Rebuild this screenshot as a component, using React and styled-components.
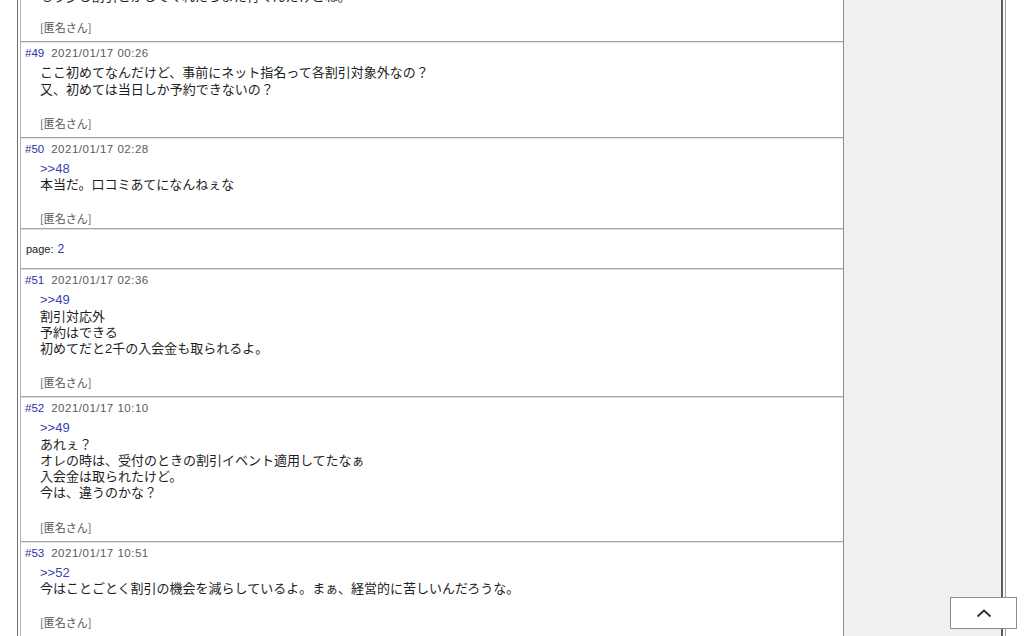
import React from "react";
import styled, { createGlobalStyle } from "styled-components";

const Global = createGlobalStyle`
  html, body { margin: 0; padding: 0; background: #ffffff; }
  body { overflow: hidden; font-family: "Liberation Sans", "Noto Sans CJK JP", sans-serif; }
`;

const Page = styled.div`
  display: flex;
  height: 636px;
  overflow: hidden;
  padding-left: 17px;
  background: #ffffff;
`;

const ThreadFrame = styled.div`
  border-left: 1px solid #6e6e6e;
  padding-left: 2px;
  display: flex;
`;

const Thread = styled.main`
  width: 822px;
  border-left: 1px solid #b4b4b4;
  border-right: 1px solid #8e8e8e;
  overflow: hidden;
  background: #ffffff;
`;

const Sidebar = styled.aside`
  width: 157px;
  background: #f0f0f0;
`;

const WindowEdge = styled.div`
  width: 2px;
  border-left: 2px solid #5c5c5c;
  border-right: 1px solid #a0a0a0;
  background: #fafafa;
`;

const Divider = styled.hr`
  margin: 0;
  height: 0;
  border: none;
  border-top: 1px solid #a3a3a3;
  border-bottom: 1px solid #e2e2e2;
`;

const Post = styled.article`
  padding: 0 4px ${(p) => (p.$tight ? "3px" : "7px")} 4px;
  margin-top: ${(p) => (p.$clipped ? "-11px" : "0")};
`;

const Header = styled.div`
  display: flex;
  align-items: baseline;
  padding-top: 3px;
  line-height: 14px;
  height: 14px;
`;

const Num = styled.span`
  color: #2a2fa6;
  font-size: 11.5px;
  font-family: "Liberation Sans", sans-serif;
`;

const DateText = styled.span`
  margin-left: 7px;
  color: #5a5a5a;
  font-size: 11.5px;
  letter-spacing: 0.5px;
  font-family: "Liberation Sans", sans-serif;
`;

const Body = styled.div`
  margin-top: ${(p) => (p.$clipped ? "0" : "5px")};
  padding-left: 15px;
  font-size: 13px;
  line-height: 16.25px;
  color: #1e1e1e;
  font-family: "Liberation Sans", "Noto Sans CJK JP", sans-serif;
`;

const Line = styled.div`
  white-space: nowrap;
`;

const Anchor = styled.a`
  display: block;
  color: #3a44b0;
  text-decoration: none;
`;

const Footer = styled.div`
  margin-top: ${(p) => (p.$clipped ? "15px" : "18px")};
  padding-left: 15px;
  font-size: 11px;
  line-height: 14px;
  color: #555555;
  font-family: "Noto Sans CJK JP", sans-serif;
`;

const PageRow = styled.div`
  height: 38px;
  display: flex;
  align-items: center;
  padding-left: 5px;
  font-size: 11px;
  color: #222;
  gap: 4px;
`;

const PageLink = styled.a`
  color: #2a2fa6;
  font-size: 12px;
  text-decoration: none;
`;

const TopButton = styled.button`
  position: fixed;
  left: 950px;
  bottom: 7px;
  width: 67px;
  height: 32px;
  background: #ffffff;
  border: 1px solid #8c8c8c;
  padding: 0;
  display: flex;
  align-items: center;
  justify-content: center;
  cursor: pointer;
`;

const posts = [
  {
    no: 49,
    date: "2021/01/17 00:26",
    lines: [
      "ここ初めてなんだけど、事前にネット指名って各割引対象外なの？",
      "又、初めては当日しか予約できないの？",
    ],
  },
  {
    no: 50,
    date: "2021/01/17 02:28",
    anchor: ">>48",
    lines: ["本当だ。口コミあてになんねぇな"],
  },
  { page: 2 },
  {
    no: 51,
    date: "2021/01/17 02:36",
    anchor: ">>49",
    lines: ["割引対応外", "予約はできる", "初めてだと2千の入会金も取られるよ。"],
  },
  {
    no: 52,
    date: "2021/01/17 10:10",
    anchor: ">>49",
    lines: [
      "あれぇ？",
      "オレの時は、受付のときの割引イベント適用してたなぁ",
      "入会金は取られたけど。",
      "今は、違うのかな？",
    ],
  },
  {
    no: 53,
    date: "2021/01/17 10:51",
    anchor: ">>52",
    lines: ["今はことごとく割引の機会を減らしているよ。まぁ、経営的に苦しいんだろうな。"],
  },
];

function PostItem({ p, tight }) {
  return (
    <Post $tight={tight}>
      <Header>
        <Num>#{p.no}</Num>
        <DateText>{p.date}</DateText>
      </Header>
      <Body>
        {p.anchor && <Anchor href="#">{p.anchor}</Anchor>}
        {p.lines.map((l, i) => (
          <Line key={i}>{l}</Line>
        ))}
      </Body>
      <Footer>[匿名さん]</Footer>
    </Post>
  );
}

export default function App() {
  return (
    <>
      <Global />
      <Page>
        <ThreadFrame>
          <Thread>
            <Post $clipped>
              <Body $clipped>
                <Line>もう少し割引とかしてくれたらまた行くんだけどね。</Line>
              </Body>
              <Footer $clipped>[匿名さん]</Footer>
            </Post>
            {posts.map((p, i) => (
              <React.Fragment key={i}>
                <Divider />
                {p.page ? (
                  <PageRow>
                    page: <PageLink href="#">{p.page}</PageLink>
                  </PageRow>
                ) : (
                  <PostItem p={p} tight={Boolean(posts[i + 1] && posts[i + 1].page)} />
                )}
              </React.Fragment>
            ))}
          </Thread>
        </ThreadFrame>
        <Sidebar />
        <WindowEdge />
      </Page>
      <TopButton aria-label="ページトップへ">
        <svg width="16" height="10" viewBox="0 0 16 10">
          <polyline points="1.5,8.5 8,2.5 14.5,8.5" fill="none" stroke="#333" strokeWidth="2" />
        </svg>
      </TopButton>
    </>
  );
}
